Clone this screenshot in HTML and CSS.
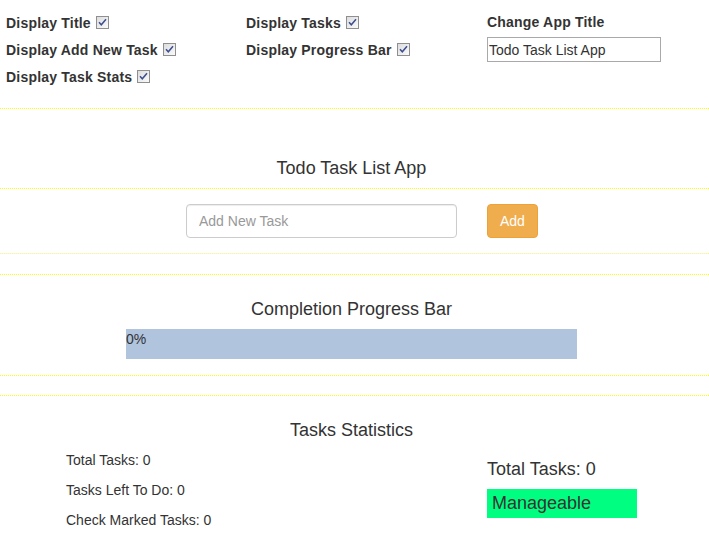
FILE: index.html
```html
<!DOCTYPE html>
<html>
<head>
<meta charset="utf-8">
<link rel="stylesheet" href="styles.css">
</head>
<body>
<div class="page">
  <div class="settings">
    <div class="col">
      <div class="opt">Display Title <svg class="cb" width="13" height="13" viewBox="0 0 13 13"><defs><linearGradient id="g1" x1="0" y1="0" x2="1" y2="1"><stop offset="0" stop-color="#dcdcdc"/><stop offset="1" stop-color="#fbfbfb"/></linearGradient></defs><rect x="0.5" y="0.5" width="12" height="12" fill="url(#g1)" stroke="#8f8f8f"/><path d="M3 6.2 L5.3 8.8 L10 3.2" fill="none" stroke="#3b4e8f" stroke-width="1.5"/></svg></div>
      <div class="opt">Display Add New Task <svg class="cb" width="13" height="13" viewBox="0 0 13 13"><rect x="0.5" y="0.5" width="12" height="12" fill="url(#g1)" stroke="#8f8f8f"/><path d="M3 6.2 L5.3 8.8 L10 3.2" fill="none" stroke="#3b4e8f" stroke-width="1.5"/></svg></div>
      <div class="opt">Display Task Stats <svg class="cb" width="13" height="13" viewBox="0 0 13 13"><rect x="0.5" y="0.5" width="12" height="12" fill="url(#g1)" stroke="#8f8f8f"/><path d="M3 6.2 L5.3 8.8 L10 3.2" fill="none" stroke="#3b4e8f" stroke-width="1.5"/></svg></div>
    </div>
    <div class="col">
      <div class="opt">Display Tasks <svg class="cb" width="13" height="13" viewBox="0 0 13 13"><rect x="0.5" y="0.5" width="12" height="12" fill="url(#g1)" stroke="#8f8f8f"/><path d="M3 6.2 L5.3 8.8 L10 3.2" fill="none" stroke="#3b4e8f" stroke-width="1.5"/></svg></div>
      <div class="opt">Display Progress Bar <svg class="cb" width="13" height="13" viewBox="0 0 13 13"><rect x="0.5" y="0.5" width="12" height="12" fill="url(#g1)" stroke="#8f8f8f"/><path d="M3 6.2 L5.3 8.8 L10 3.2" fill="none" stroke="#3b4e8f" stroke-width="1.5"/></svg></div>
    </div>
    <div class="col">
      <div class="label">Change App Title</div>
      <input class="title-input" type="text" value="Todo Task List App">
    </div>
  </div>
  <div class="rule"></div>

  <div class="title-sec">
    <h4 class="sec-title">Todo Task List App</h4>
  </div>
  <div class="rule"></div>

  <div class="add-sec">
    <input class="task-input" type="text" placeholder="Add New Task">
    <button class="add-btn">Add</button>
  </div>
  <div class="rule pale"></div>

  <div class="gap"></div>
  <div class="rule"></div>
  <div class="progress-sec">
    <h4 class="sec-title">Completion Progress Bar</h4>
    <div class="bar">0%</div>
  </div>
  <div class="rule"></div>

  <div class="gap gap-b"></div>
  <div class="rule"></div>
  <div class="stats-sec">
    <h4 class="sec-title">Tasks Statistics</h4>
    <div class="stats-grid">
      <div class="stats-left">
        <p>Total Tasks: 0</p>
        <p>Tasks Left To Do: 0</p>
        <p>Check Marked Tasks: 0</p>
      </div>
      <div class="stats-right">
        <div class="big-total">Total Tasks: 0</div>
        <div class="status">Manageable</div>
      </div>
    </div>
  </div>
</div>
</body>
</html>
```

FILE: styles.css
```css
html, body {
  margin: 0;
  padding: 0;
  background: #fff;
}
body {
  font-family: "Liberation Sans", Arial, sans-serif;
  font-size: 14px;
  color: #333;
}
.page {
  width: 709px;
}
.rule {
  height: 1px;
  background-color: #ffffff;
  background-image: linear-gradient(to right, #ffff00 50%, #ffffff 50%);
  background-size: 2px 1px;
  background-repeat: repeat-x;
}
.rule.pale {
  background-color: #f5f5f5;
  background-image: linear-gradient(to right, #fafa80 50%, #f5f5f5 50%);
}
.gap {
  height: 20px;
}
.gap-b {
  height: 19px;
}
.settings {
  display: grid;
  grid-template-columns: 240px 241px 1fr;
  padding: 10px 12px 17px 6px;
}
.opt {
  height: 27px;
  line-height: 27px;
  font-weight: bold;
  font-size: 14px;
  letter-spacing: 0.2px;
  white-space: nowrap;
}
.cb {
  vertical-align: -1px;
  margin-left: 1px;
}
.label {
  font-weight: bold;
  font-size: 14px;
  line-height: 20px;
  margin-top: 2px;
  letter-spacing: 0.2px;
}
.title-input {
  display: block;
  box-sizing: border-box;
  width: 174px;
  height: 25px;
  margin: 5px 0 0;
  padding: 0 1px;
  border: 1px solid #a9a9a9;
  font-family: "Liberation Sans", Arial, sans-serif;
  font-size: 14px;
  color: #333;
  background: #fff;
}
.sec-title {
  margin: 0;
  font-size: 18px;
  line-height: 20px;
  font-weight: normal;
  text-align: center;
  color: #333;
  padding: 0 12px 0 6px;
}
.title-sec {
  padding: 49px 0 10px;
}
.add-sec {
  display: flex;
  gap: 30px;
  padding: 15px 0 15px 186px;
}
.task-input {
  box-sizing: border-box;
  width: 271px;
  height: 34px;
  margin: 0;
  padding: 6px 12px;
  border: 1px solid #ccc;
  border-radius: 4px;
  font-family: "Liberation Sans", Arial, sans-serif;
  font-size: 14px;
  color: #555;
  box-shadow: inset 0 1px 1px rgba(0,0,0,0.075);
}
.task-input::placeholder {
  color: #999;
}
.add-btn {
  box-sizing: border-box;
  height: 34px;
  margin: 0;
  padding: 6px 12px;
  border: 1px solid #eea236;
  border-radius: 4px;
  background: #f0ad4e;
  color: #fff;
  font-family: "Liberation Sans", Arial, sans-serif;
  font-size: 14px;
  line-height: 20px;
}
.progress-sec {
  padding: 24px 0 16px;
}
.bar {
  width: 451px;
  height: 30px;
  margin: 10px 0 0 126px;
  background: #b0c4de;
  line-height: 20px;
  font-size: 14px;
  color: #333;
}
.stats-sec {
  padding-top: 24px;
}
.stats-grid {
  display: grid;
  grid-template-columns: 487px 1fr;
}
.stats-left {
  padding-left: 66px;
  margin-top: 10px;
}
.stats-left p {
  margin: 0 0 10px;
  line-height: 20px;
}
.stats-right {
  margin-top: 19px;
}
.big-total {
  font-size: 18px;
  line-height: 20px;
}
.status {
  width: 150px;
  height: 29px;
  margin-top: 10px;
  box-sizing: border-box;
  padding-left: 5px;
  background: #00ff80;
  font-size: 18px;
  line-height: 29px;
}
```
